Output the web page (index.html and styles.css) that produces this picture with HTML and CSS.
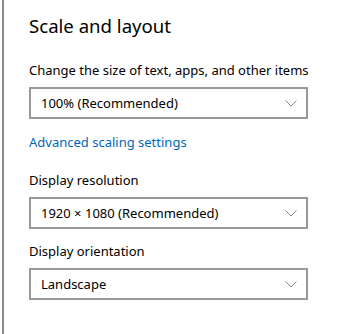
FILE: index.html
```html
<!DOCTYPE html>
<html lang="en">
<head>
    <meta charset="UTF-8">
    <title>Scale and layout</title>
    <link rel="stylesheet" href="styles.css">
</head>
<body>
    <div class="panel">
        <h2 class="title">Scale and layout</h2>

        <div class="field">
            <label class="field-label">Change the size of text, apps, and other items</label>
            <div class="dropdown">
                <span>100% (Recommended)</span>
                <svg class="chevron" width="12" height="7" viewBox="0 0 12 7"><path d="M0.5 0.5 L6 6 L11.5 0.5" fill="none" stroke="#888" stroke-width="1"/></svg>
            </div>
        </div>

        <a class="link" href="#">Advanced scaling settings</a>

        <div class="field">
            <label class="field-label">Display resolution</label>
            <div class="dropdown">
                <span>1920 × 1080 (Recommended)</span>
                <svg class="chevron" width="12" height="7" viewBox="0 0 12 7"><path d="M0.5 0.5 L6 6 L11.5 0.5" fill="none" stroke="#888" stroke-width="1"/></svg>
            </div>
        </div>

        <div class="field">
            <label class="field-label">Display orientation</label>
            <div class="dropdown">
                <span>Landscape</span>
                <svg class="chevron" width="12" height="7" viewBox="0 0 12 7"><path d="M0.5 0.5 L6 6 L11.5 0.5" fill="none" stroke="#888" stroke-width="1"/></svg>
            </div>
        </div>
    </div>
</body>
</html>
```

FILE: styles.css
```css
body {
    margin: 0;
    background: #fff;
    font-family: "Noto Sans", "Open Sans", sans-serif;
    color: #000;
}
.panel {
    margin-left: 2px;
    border-left: 2px solid #8c8c8c;
    height: 334px;
    box-sizing: border-box;
    padding: 13px 0 0 25px;
}
.title {
    margin: 0;
    font-size: 18.6px;
    font-weight: normal;
    line-height: 26px;
}
.field {
    margin-top: 18px;
}
.title + .field {
    margin-top: 21px;
}
.field + .field {
    margin-top: 12px;
}
.field-label {
    display: block;
    font-size: 13px;
    line-height: 20px;
}
.dropdown {
    margin-top: 7px;
    width: 279px;
    height: 32px;
    box-sizing: border-box;
    border: 2px solid #999;
    display: flex;
    align-items: center;
    justify-content: space-between;
    padding: 0 9px 0 10px;
    font-size: 13px;
}
.chevron {
    display: block;
}
.link {
    display: block;
    margin-top: 13px;
    color: #0067c0;
    text-decoration: none;
    font-size: 13px;
    line-height: 20px;
}
```
